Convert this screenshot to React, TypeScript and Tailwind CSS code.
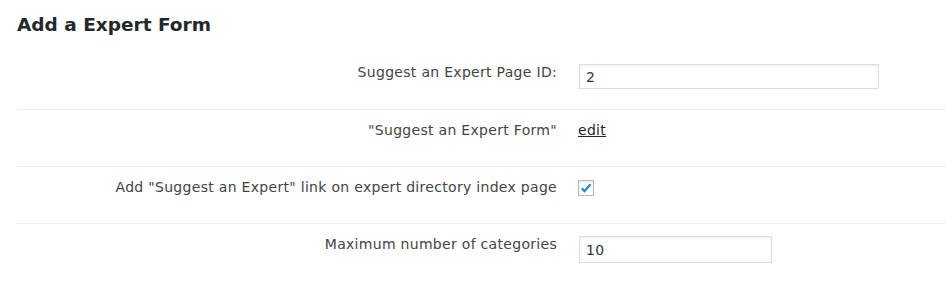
export default function App() {
  return (
    <div className="w-[946px] h-[281px] bg-white text-[#444] text-[14px] tracking-[0.3px] leading-[17px] font-['DejaVu_Sans','Verdana',sans-serif] overflow-hidden">
      <h2 className="pl-[17px] pt-[13px] h-[52px] text-[18.5px] tracking-normal leading-[24px] font-bold text-[#23282d]">
        Add a Expert Form
      </h2>
      <div className="ml-[17px]">
        <Row label="Suggest an Expert Page ID:" first>
          <input
            defaultValue="2"
            className="mt-[12px] ml-[1px] w-[300px] h-[25px] border border-[#ddd] px-[6px] text-[14px] text-[#32373c] shadow-[inset_0_1px_2px_rgba(0,0,0,0.07)] outline-none"
          />
        </Row>
        <Row label={'"Suggest an Expert Form"'}>
          <a href="#" className="block pt-[12px] underline text-[#23282d]">
            edit
          </a>
        </Row>
        <Row label={'Add "Suggest an Expert" link on expert directory index page'}>
          <span className="mt-[13px] flex items-center justify-center w-[16px] h-[16px] border border-[#b4b9be] bg-white shadow-[inset_0_1px_2px_rgba(0,0,0,0.1)]">
            <svg width="14" height="14" viewBox="0 0 20 20">
              <path d="M4 10.5l3.8 4L16.5 4.5" fill="none" stroke="#1e8cbe" strokeWidth="3.2" />
            </svg>
          </span>
        </Row>
        <Row label="Maximum number of categories">
          <input
            defaultValue="10"
            className="mt-[12px] ml-[1px] w-[193px] h-[27px] border border-[#ddd] px-[6px] text-[14px] text-[#32373c] shadow-[inset_0_1px_2px_rgba(0,0,0,0.07)] outline-none"
          />
        </Row>
      </div>
    </div>
  );
}

function Row({
  label,
  first,
  children,
}: {
  label: string;
  first?: boolean;
  children: React.ReactNode;
}) {
  return (
    <div
      className={`grid grid-cols-[550px_1fr] h-[57px] ${first ? "" : "border-t border-[#ececec]"}`}
    >
      <div className="text-right pr-[10px] pt-[12px]">{label}</div>
      <div className="pl-[11px]">{children}</div>
    </div>
  );
}
